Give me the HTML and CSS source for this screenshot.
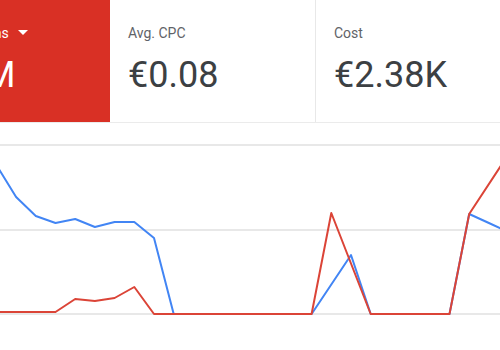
FILE: index.html
```html
<!DOCTYPE html>
<html lang="en">
<head>
    <meta charset="UTF-8">
    <meta name="viewport" content="width=device-width, initial-scale=1.0">
    <title>Campaign overview</title>
    <link rel="stylesheet" href="styles.css">
</head>
<body>
    <div class="scorecards">
        <div class="card card-active">
            <div class="card-label">Impressions<span class="caret"></span></div>
            <div class="card-value">1.2M</div>
        </div>
        <div class="card card-cpc">
            <div class="card-label">Avg. CPC</div>
            <div class="card-value">€0.08</div>
        </div>
        <div class="card card-cost">
            <div class="card-label">Cost</div>
            <div class="card-value">€2.38K</div>
        </div>
    </div>
    <svg class="chart" viewBox="0 123 500 227" width="500" height="227">
        <!-- grid -->
        <line class="grid" x1="0" y1="145" x2="500" y2="145"/>
        <line class="grid" x1="0" y1="230" x2="500" y2="230"/>
        <line class="grid" x1="0" y1="314" x2="500" y2="314"/>
        <!-- series -->
        <polyline class="series series-blue" points="-3.6,165 16.1,197 35.8,216 55.5,223 75.2,219 94.9,227 114.6,222 134.3,222 154,238 173.7,314 311.6,314 351,255 370.7,314 449.5,314 469.2,214 488.9,223 508.6,232"/>
        <polyline class="series series-red" points="-3.6,312 55.5,312 75.2,299 94.9,301 114.6,298 134.3,287 154,314 311.6,314 331.3,213 370.7,314 449.5,314 469.2,214 508.6,154"/>
    </svg>
</body>
</html>
```

FILE: styles.css
```css
body {
    margin: 0;
    font-family: Roboto, 'Noto Sans', sans-serif;
    background-color: #ffffff;
    overflow: hidden;
}
.scorecards {
    display: flex;
    height: 122px;
    border-bottom: 1px solid #ebebeb;
}
.card {
    box-sizing: border-box;
    padding: 23px 18px 0;
    flex-shrink: 0;
}
.card-label {
    font-size: 14px;
    line-height: 20px;
    color: #5f6368;
}
.card-value {
    margin-top: 12px;
    font-size: 36px;
    line-height: 40px;
    color: #3c4043;
}
.card-active {
    width: 196px;
    margin-left: -86px;
    background-color: #d93025;
}
.card-active .card-label,
.card-active .card-value {
    color: #ffffff;
    white-space: nowrap;
}
.card-active .card-value {
    padding-left: 2px;
}
.caret {
    display: inline-block;
    margin-left: 9px;
    margin-bottom: 3px;
    vertical-align: middle;
    border-left: 5px solid transparent;
    border-right: 5px solid transparent;
    border-top: 5px solid #ffffff;
}
.card-cpc {
    width: 206px;
    border-right: 1px solid #e8e8e8;
}
.card-cost {
    flex: 1;
}
.chart {
    display: block;
}
.grid {
    stroke: #e0e0e0;
    stroke-width: 1.5;
}
.series {
    fill: none;
    stroke-width: 2;
    stroke-linejoin: round;
}
.series-blue {
    stroke: #4285f4;
}
.series-red {
    stroke: #db4437;
}
```
